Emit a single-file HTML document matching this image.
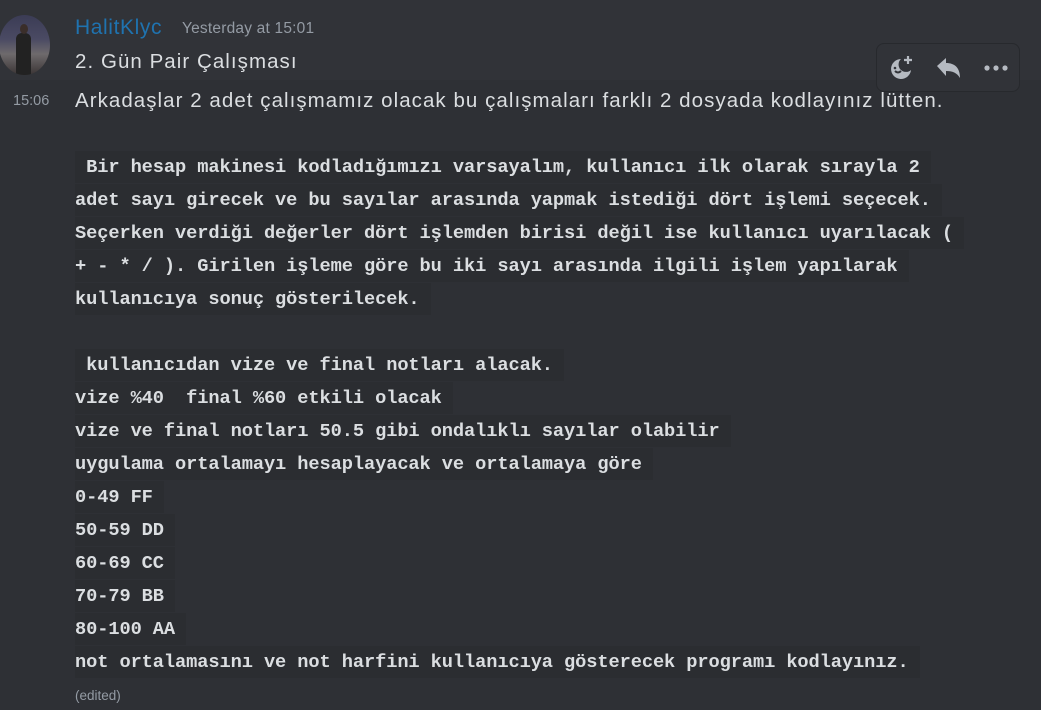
<!DOCTYPE html>
<html><head><meta charset="utf-8"><style>
html,body{margin:0;padding:0;width:1041px;height:710px;overflow:hidden;background:#2e3035;font-family:"Liberation Sans","DejaVu Sans",sans-serif;}
.top{position:absolute;left:0;top:0;width:1041px;height:80px;background:#313338;}
.av{position:absolute;left:-1px;top:15px;width:51px;height:60px;border-radius:50%;overflow:hidden;background:linear-gradient(180deg,#3b3c55 0%,#4a4a63 40%,#6e6a6c 65%,#3a3434 100%);}
.name{position:absolute;left:75px;top:16px;font-size:21px;letter-spacing:0.6px;color:#1f73b0;}
.ts{position:absolute;left:182px;top:20px;font-size:15.5px;letter-spacing:0.2px;color:#949ba4;}
.t{position:absolute;color:#dbdee1;font-size:20.5px;letter-spacing:1.05px;white-space:pre;}
.time{position:absolute;left:13px;top:93px;font-size:14.5px;color:#949ba4;}
.c{position:absolute;left:75px;height:32px;line-height:32px;background:#2b2d31;color:#dbdee1;font-family:"Liberation Mono","DejaVu Sans Mono",monospace;font-weight:bold;font-size:18.7px;letter-spacing:-0.1px;white-space:pre;}
.bar{position:absolute;left:876px;top:43px;width:144px;height:49px;box-sizing:border-box;border:1px solid #27292d;border-radius:8px;background:#313338;}
.ed{position:absolute;left:75px;top:688px;font-size:13.5px;color:#949ba4;}
</style></head><body>
<div class="top"></div>
<div class="av"><div style="position:absolute;left:17px;top:18px;width:15px;height:42px;background:#222;border-radius:6px 6px 0 0"></div><div style="position:absolute;left:21px;top:9px;width:8px;height:10px;background:#3a2e2a;border-radius:50%"></div></div>
<div class="name">HalitKlyc</div>
<div class="ts">Yesterday at 15:01</div>
<div class="t" style="left:75px;top:50px">2. Gün Pair Çalışması</div>
<div class="time">15:06</div>
<div class="t" style="left:75px;top:89px">Arkadaşlar 2 adet çalışmamız olacak bu çalışmaları farklı 2 dosyada kodlayınız lütten.</div>
<div class="bar">
<svg style="position:absolute;left:10px;top:10px" width="28" height="28" viewBox="0 0 28 28"><path d="M14 5a10 10 0 1 0 10 11 7 7 0 0 1-10-11z" fill="#b5bac1"/><path d="M8 17q3 3 6 0" stroke="#313338" stroke-width="2" fill="none"/><circle cx="8" cy="14" r="1.3" fill="#313338"/><circle cx="14" cy="14" r="1.3" fill="#313338"/><path d="M21 2v8M17 6h8" stroke="#b5bac1" stroke-width="2.2"/></svg>
<svg style="position:absolute;left:58px;top:12px" width="28" height="24" viewBox="0 0 28 24"><path d="M2 10l9-8v5c9 0 14 5 14 15-3-5-7-7-14-7v5z" fill="#b5bac1"/></svg>
<svg style="position:absolute;left:106px;top:20px" width="26" height="8"><circle cx="4" cy="4" r="2.6" fill="#b5bac1"/><circle cx="13" cy="4" r="2.6" fill="#b5bac1"/><circle cx="22" cy="4" r="2.6" fill="#b5bac1"/></svg>
</div>
<div class="c" style="top:151px"> Bir hesap makinesi kodladığımızı varsayalım, kullanıcı ilk olarak sırayla 2 </div>
<div class="c" style="top:184px">adet sayı girecek ve bu sayılar arasında yapmak istediği dört işlemi seçecek. </div>
<div class="c" style="top:217px">Seçerken verdiği değerler dört işlemden birisi değil ise kullanıcı uyarılacak ( </div>
<div class="c" style="top:250px">+ - * / ). Girilen işleme göre bu iki sayı arasında ilgili işlem yapılarak </div>
<div class="c" style="top:283px">kullanıcıya sonuç gösterilecek. </div>
<div class="c" style="top:349px"> kullanıcıdan vize ve final notları alacak. </div>
<div class="c" style="top:382px">vize %40  final %60 etkili olacak </div>
<div class="c" style="top:415px">vize ve final notları 50.5 gibi ondalıklı sayılar olabilir </div>
<div class="c" style="top:448px">uygulama ortalamayı hesaplayacak ve ortalamaya göre </div>
<div class="c" style="top:481px">0-49 FF </div>
<div class="c" style="top:514px">50-59 DD </div>
<div class="c" style="top:547px">60-69 CC </div>
<div class="c" style="top:580px">70-79 BB </div>
<div class="c" style="top:613px">80-100 AA </div>
<div class="c" style="top:646px">not ortalamasını ve not harfini kullanıcıya gösterecek programı kodlayınız. </div>
<div class="ed">(edited)</div>
</body></html>
